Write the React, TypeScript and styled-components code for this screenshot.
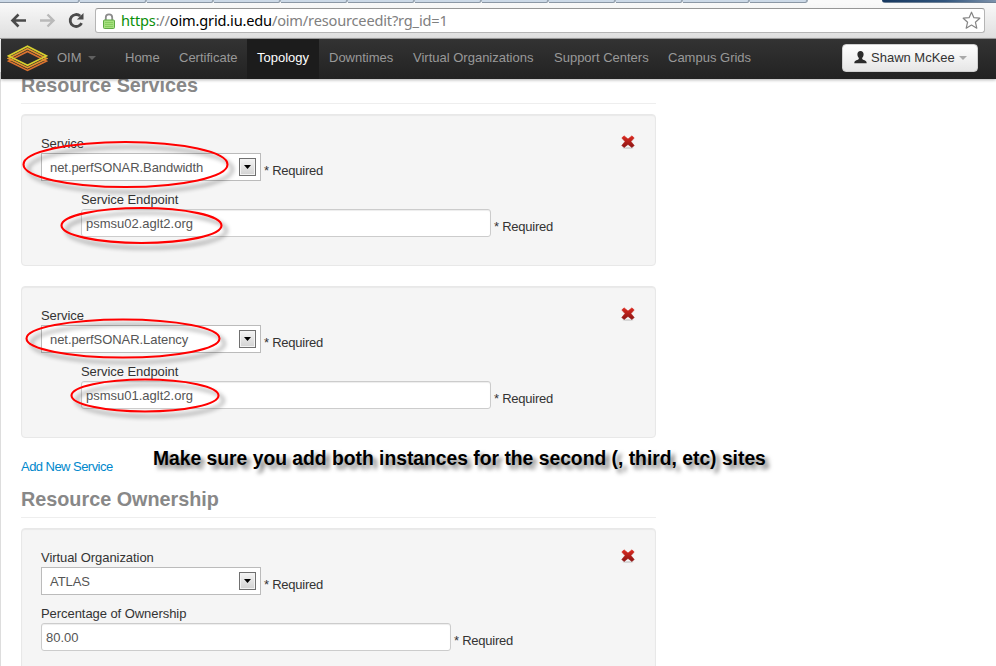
import React from "react";
import styled, { createGlobalStyle, css } from "styled-components";

const Global = createGlobalStyle`
  * { box-sizing: border-box; }
  html, body { margin: 0; height: 666px; overflow: hidden; background: #fff; }
  body { font: 13px/18px "Liberation Sans", Arial, sans-serif; color: #333; }
`;

const Window = styled.div`
  position: relative;
  height: 666px;
  display: flex;
  flex-direction: column;
  overflow: hidden;
`;

/* ---------- browser chrome ---------- */

const TabStrip = styled.div`
  flex: none;
  height: 3px;
  display: flex;
  background: #fbfbfb;
`;

const BackgroundTab = styled.div<{ $w: number }>`
  width: ${(p) => p.$w}px;
  background: #ccd9e7;
  border-right: 2px solid #9aa7b5;
  border-bottom: 1px solid #8b97a5;
  border-bottom-right-radius: 3px;
`;

const ActiveTab = styled.div`
  flex: 1;
  background: #f9f9f9;
`;

const Desktop = styled.div`
  width: 114px;
  background: linear-gradient(90deg, #16375f, #30547c 55%, #7e93ac);
  border-bottom: 1px solid #6d7f94;
  border-bottom-left-radius: 3px;
`;

const Toolbar = styled.div`
  flex: none;
  height: 36px;
  display: flex;
  align-items: flex-start;
  padding: 5px 11px 0 10px;
  background: linear-gradient(#f9f9f9, #dfdfdf);
  border-bottom: 1px solid #a2a2a2;
`;

const NavIcon = styled.svg`
  flex: none;
  display: block;
  width: 17px;
  height: 17px;
  margin: 4px 12px 0 0;
`;

const AddressBar = styled.div`
  flex: 1;
  height: 25px;
  margin-left: -2px;
  display: flex;
  align-items: center;
  padding: 0 3px 0 7px;
  background: #fff;
  border: 1px solid #b5b5b5;
  border-top-color: #969696;
  border-radius: 3px;
`;

const Lock = styled.svg`
  flex: none;
  width: 12px;
  height: 16px;
  margin-right: 6px;
`;

const Url = styled.div`
  flex: 1;
  padding-bottom: 2px;
  font: 14.6px/20px "Noto Sans", "Open Sans", sans-serif;
  letter-spacing: -0.18px;
  white-space: pre;
  color: #808080;
`;

const Scheme = styled.span`
  color: #0a8f0a;
`;

const Host = styled.span`
  color: #000;
`;

const Star = styled.svg`
  flex: none;
  width: 19px;
  height: 19px;
`;

/* ---------- site navigation ---------- */

const Navbar = styled.nav`
  flex: none;
  position: relative;
  z-index: 2;
  height: 40px;
  display: flex;
  align-items: stretch;
  margin-left: 1px;
  padding: 0 18px 0 6px;
  background: linear-gradient(#333, #222);
  box-shadow: 0 1px 3px rgba(0, 0, 0, 0.3);
`;

const Logo = styled.svg`
  flex: none;
  width: 41px;
  height: 28px;
  margin: 5px 9px 0 0;
`;

const Brand = styled.div`
  width: 58px;
  display: flex;
  align-items: center;
  padding-bottom: 2px;
  color: #999;
`;

const Caret = styled.i<{ $color: string; $gap: number }>`
  width: 0;
  height: 0;
  margin-left: ${(p) => p.$gap}px;
  border: 4px solid transparent;
  border-top-color: ${(p) => p.$color};
  border-bottom: 0;
`;

const NavLink = styled.a<{ $w: number; $active?: boolean }>`
  width: ${(p) => p.$w}px;
  display: flex;
  align-items: center;
  padding: 0 0 2px 10px;
  white-space: nowrap;
  color: #999;
  ${(p) =>
    p.$active &&
    css`
      color: #fff;
      background: #1c1c1c;
    `}
`;

const UserButton = styled.button`
  width: 136px;
  height: 28px;
  margin: 5px 0 0 auto;
  padding: 0 0 0 11px;
  display: flex;
  align-items: center;
  font: inherit;
  color: #333;
  white-space: nowrap;
  background: linear-gradient(#fff, #e6e6e6);
  border: 1px solid #d0d0d0;
  border-radius: 4px;
`;

const UserIcon = styled.svg`
  flex: none;
  width: 13px;
  height: 13px;
  margin: 0 4px 2px 0;
`;

/* ---------- form ---------- */

const Page = styled.main`
  flex: 1;
  margin-top: -7px;
  border-left: 1px solid #ddd;
  padding-left: 20px;
`;

const Content = styled.div`
  width: 635px;
`;

const Heading = styled.h3`
  margin: 0 0 10px;
  height: 32px;
  font-size: 19.8px;
  line-height: 27px;
  font-weight: bold;
  color: #888;
  border-bottom: 1px solid #eee;
`;

const Well = styled.section`
  position: relative;
  height: 152px;
  margin-bottom: 20px;
  padding: 20px 19px;
  background: #f5f5f5;
  border: 1px solid #e8e8e8;
  border-radius: 4px;
  box-shadow: inset 0 1px 1px rgba(0, 0, 0, 0.05);
`;

const Remove = styled.svg`
  position: absolute;
  top: 20px;
  right: 20px;
  width: 14px;
  height: 14px;
`;

const Field = styled.div<{ $indent?: boolean }>`
  height: 56px;
  margin-left: ${(p) => (p.$indent ? 40 : 0)}px;
`;

const Label = styled.label`
  display: block;
  height: 18px;
  white-space: nowrap;
  letter-spacing: -0.06px;
`;

const Control = styled.div`
  display: flex;
`;

const Select = styled.div`
  width: 220px;
  height: 28px;
  display: flex;
  align-items: center;
  justify-content: space-between;
  padding: 0 4px 0 8px;
  color: #555;
  background: #fff;
  border: 1px solid #bbb;
`;

const Value = styled.span`
  padding-top: 2px;
  letter-spacing: -0.06px;
`;

const DropButton = styled.span`
  width: 17px;
  height: 18px;
  display: flex;
  align-items: center;
  justify-content: center;
  background: linear-gradient(#f4f4f4, #d2d2d2);
  border: 1px solid #707070;
  box-shadow: inset 0 0 0 1px #f3f3f3;
`;

const Arrow = styled.svg`
  width: 7px;
  height: 4px;
`;

const Input = styled.div`
  width: 410px;
  height: 28px;
  padding: 0 4px;
  line-height: 27px;
  color: #555;
  background: #fff;
  border: 1px solid #ccc;
  border-radius: 3px;
  box-shadow: inset 0 1px 1px rgba(0, 0, 0, 0.075);
`;

const Required = styled.span`
  margin: 9px 0 0 3px;
  letter-spacing: -0.25px;
`;

const AddLink = styled.a`
  display: block;
  height: 18px;
  margin-bottom: 10px;
  letter-spacing: -0.54px;
  color: #08c;
`;

/* ---------- hand annotations laid over the page ---------- */

const Annotations = styled.svg`
  position: absolute;
  inset: 0;
  z-index: 3;
  pointer-events: none;
`;

const Note = styled.div`
  position: absolute;
  left: 153px;
  top: 447px;
  z-index: 3;
  font-size: 19.3px;
  line-height: 24px;
  font-weight: bold;
  color: #000;
  white-space: nowrap;
  text-shadow: 4px 4px 4px rgba(0, 0, 0, 0.55);
`;

const tabs = [80, 67, 67, 67, 67, 67, 67, 67, 67, 67, 67, 58];

const links = [
  { text: "Home", w: 54 },
  { text: "Certificate", w: 78 },
  { text: "Topology", w: 72, active: true },
  { text: "Downtimes", w: 84 },
  { text: "Virtual Organizations", w: 141 },
  { text: "Support Centers", w: 114 },
  { text: "Campus Grids", w: 103 },
];

const ellipses = [
  { cx: 125.5, cy: 164.5, rx: 102, ry: 22.5 },
  { cx: 141.5, cy: 225.5, rx: 80, ry: 17.5 },
  { cx: 123, cy: 338.5, rx: 96.5, ry: 19 },
  { cx: 145, cy: 395.5, rx: 73.5, ry: 16 },
];

const RemoveIcon = () => (
  <Remove viewBox="0 0 14 14">
    <defs>
      <linearGradient id="removeFill" x1="0" y1="0" x2="0" y2="1">
        <stop offset="0" stopColor="#dc2a20" />
        <stop offset="1" stopColor="#8a1414" />
      </linearGradient>
    </defs>
    <ellipse cx="7" cy="13" rx="5.5" ry="0.8" fill="#ccc" />
    <path
      d="M3 .8 7 4 11 .8 13.2 3 10 6.6 13.2 10.4 11 12.6 7 9.4 3 12.6 .8 10.4 4 6.6 .8 3Z"
      fill="url(#removeFill)"
      stroke="url(#removeFill)"
      strokeWidth=".6"
      strokeLinejoin="round"
    />
  </Remove>
);

const SelectField = ({ label, value }: { label: string; value: string }) => (
  <Field>
    <Label>{label}</Label>
    <Control>
      <Select>
        <Value>{value}</Value>
        <DropButton>
          <Arrow viewBox="0 0 7 4">
            <path d="M0 0H7L3.5 4Z" fill="#000" />
          </Arrow>
        </DropButton>
      </Select>
      <Required>* Required</Required>
    </Control>
  </Field>
);

const InputField = ({ label, value, indent }: { label: string; value: string; indent?: boolean }) => (
  <Field $indent={indent}>
    <Label>{label}</Label>
    <Control>
      <Input>{value}</Input>
      <Required>* Required</Required>
    </Control>
  </Field>
);

const ServiceWell = ({ service, endpoint }: { service: string; endpoint: string }) => (
  <Well>
    <RemoveIcon />
    <SelectField label="Service" value={service} />
    <InputField label="Service Endpoint" value={endpoint} indent />
  </Well>
);

export default function App() {
  return (
    <>
      <Global />
      <Window>
        <TabStrip>
          {tabs.map((w, i) => (
            <BackgroundTab key={i} $w={w} />
          ))}
          <ActiveTab />
          <Desktop />
        </TabStrip>
        <Toolbar>
          <NavIcon viewBox="0 0 17 17" fill="none" stroke="#4a4a4a" strokeWidth="2.6">
            <path d="M16 8.5H3M8.5 2.5 2.5 8.5 8.5 14.5" />
          </NavIcon>
          <NavIcon viewBox="0 0 17 17" fill="none" stroke="#b9b9b9" strokeWidth="2.4">
            <path d="M1 8.5H14M8.5 2.5 14.5 8.5 8.5 14.5" />
          </NavIcon>
          <NavIcon viewBox="0 0 17 17">
            <path d="M12.2 4A6 6 0 1 0 13.6 11.2" fill="none" stroke="#4a4a4a" strokeWidth="2.8" />
            <path d="M15.5 1V7.6H8.9Z" fill="#4a4a4a" />
          </NavIcon>
          <AddressBar>
            <Lock viewBox="0 0 12 16">
              <path d="M2.8 8V4.5a3.2 3.2 0 0 1 6.4 0V8" fill="none" stroke="#8b8b8b" strokeWidth="1.8" />
              <rect x=".5" y="7" width="11" height="8.5" rx="1" fill="#a5e07f" stroke="#5fa845" />
              <path d="M2 9.5h8M2 11.5h8M2 13.5h8" stroke="#86cc5e" />
            </Lock>
            <Url>
              <Scheme>https</Scheme>://<Host>oim.grid.iu.edu</Host>/oim/resourceedit?rg_id=1
            </Url>
            <Star viewBox="0 0 19 19">
              <path
                d="M9.5 1.2 11.9 6.7 17.8 7.2 13.4 11.2 14.8 17.2 9.5 14.1 4.2 17.2 5.6 11.2 1.2 7.2 7.1 6.7Z"
                fill="#fff"
                stroke="#858585"
                strokeWidth="1.2"
                strokeLinejoin="round"
              />
            </Star>
          </AddressBar>
        </Toolbar>
        <Navbar>
          <Logo viewBox="0 0 41 28" fill="none" strokeWidth="1.7">
            <path d="M1.5 17.1 20.5 26.4 39.5 17.1 20.5 7.4Z" stroke="#dd7430" />
            <path d="M1.5 14.5 20.5 23.8 39.5 14.5 20.5 4.8Z" stroke="#e2942f" />
            <path d="M1.5 11.9 20.5 21.2 39.5 11.9 20.5 2.2Z" stroke="#d8d02f" />
          </Logo>
          <Brand>
            OIM
            <Caret $color="#606060" $gap={6} />
          </Brand>
          {links.map((l) => (
            <NavLink key={l.text} $w={l.w} $active={l.active}>
              {l.text}
            </NavLink>
          ))}
          <UserButton>
            <UserIcon viewBox="0 0 13 13">
              <path
                d="M6.5 0C4.5 0 3.4 1.3 3.4 3.2c0 1.5.5 2.8 1.4 3.6v1.3C4.3 9.2.3 9.2.3 12.2h12.4c0-3-4-3-4.5-4.1V6.8c.9-.8 1.4-2.1 1.4-3.6C9.6 1.3 8.5 0 6.5 0Z"
                fill="#2c2c2c"
              />
            </UserIcon>
            Shawn McKee
            <Caret $color="#aaa" $gap={4} />
          </UserButton>
        </Navbar>
        <Page>
          <Content>
            <Heading>Resource Services</Heading>
            <ServiceWell service="net.perfSONAR.Bandwidth" endpoint="psmsu02.aglt2.org" />
            <ServiceWell service="net.perfSONAR.Latency" endpoint="psmsu01.aglt2.org" />
            <AddLink>Add New Service</AddLink>
            <Heading>Resource Ownership</Heading>
            <Well>
              <RemoveIcon />
              <SelectField label="Virtual Organization" value="ATLAS" />
              <InputField label="Percentage of Ownership" value="80.00" />
            </Well>
          </Content>
        </Page>
        <Annotations width="996" height="666" viewBox="0 0 996 666">
          <defs>
            <filter id="inkShadow" x="-10%" y="-30%" width="125%" height="180%">
              <feDropShadow dx="5" dy="5" stdDeviation="2" floodColor="#000" floodOpacity="0.42" />
            </filter>
          </defs>
          {ellipses.map((e, i) => (
            <ellipse key={i} {...e} fill="none" stroke="#f00" strokeWidth="2.1" filter="url(#inkShadow)" />
          ))}
        </Annotations>
        <Note>Make sure you add both instances for the second (, third, etc) sites</Note>
      </Window>
    </>
  );
}
